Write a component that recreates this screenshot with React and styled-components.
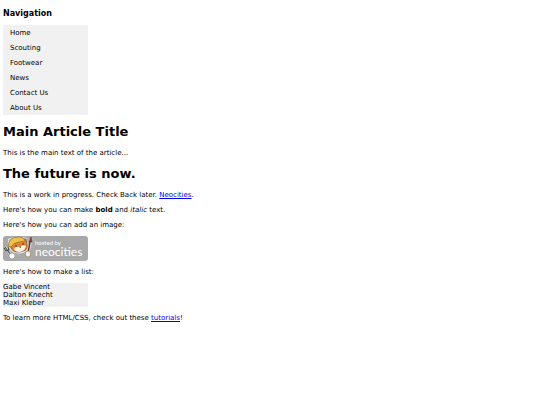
import React from "react";
import styled, { createGlobalStyle } from "styled-components";

const GlobalStyle = createGlobalStyle`
  body {
    margin: 0;
    background: #fff;
    color: #000;
    font-family: "DejaVu Sans", Verdana, sans-serif;
    font-size: 7px;
    line-height: 8px;
  }
`;

const Page = styled.div`
  padding: 9px 3px;
`;

const NavHeading = styled.h3`
  margin: 0 0 6px;
  font-size: 8px;
  line-height: 10px;
`;

const List = styled.ul`
  list-style: none;
  margin: 0;
  padding: 0;
  width: 85px;
  background: #f1f1f1;
`;

const NavLink = styled.a`
  display: block;
  padding: 2px 7px 0;
  line-height: 13px;
  color: #000;
  text-decoration: none;
`;

const Title = styled.h1`
  margin: 9px 0;
  font-size: 13px;
  line-height: 16px;
`;

const Paragraph = styled.p`
  margin: 7px 0;
`;

const TextLink = styled.a`
  color: #0000ee;
  text-decoration: underline;
`;

const Badge = styled.svg`
  display: block;
  width: 85px;
  height: 25px;
`;

const BadgeText = styled.text`
  font-family: Lato, sans-serif;
  fill: #fff;
`;

const navItems = ["Home", "Scouting", "Footwear", "News", "Contact Us", "About Us"];
const people = ["Gabe Vincent", "Dalton Knecht", "Maxi Kleber"];

function NeocitiesBadge() {
  return (
    <Badge viewBox="0 0 85 25" role="img" aria-label="Hosted by Neocities">
      <rect width="85" height="25" rx="3" fill="#a9a9a9" />
      <path d="M5 9 L5 3 L11 1 L20 1 L24 2 L25 10 Q26 15 20 17 Q11 19 7 14Z" fill="#ddd" />
      <path d="M8 9 L9 3 L18 3 L23 3 L24 9 Q25 14 20 15 Q11 18 8 12Z" fill="#df8435" stroke="#714221" strokeWidth=".7" />
      <path d="M11 13 Q13 10 16 11 Q20 8 23 10 Q22 15 17 16 Q12 16 11 13Z" fill="#fff2df" />
      <path d="M5 10 L7 4 Q10 1 15 1 Q21 1 22 5 L16 6 Q10 7 8 11Z" fill="#edc14b" stroke="#92682b" strokeWidth=".7" />
      <circle cx="13" cy="10" r=".8" fill="#322820" />
      <circle cx="20" cy="8" r=".8" fill="#322820" />
      <path d="M16 11 L18 10 L18 12Z" fill="#9e4030" />
      <path d="M1 12 L3 15 L6 14 L5 11 M2 11 L8 19" fill="none" stroke="#ddd" strokeWidth="2.2" />
      <path d="M1 12 L3 15 L6 14 L5 11 M2 11 L8 19" fill="none" stroke="#4c4c4c" strokeWidth="1.1" />
      <path d="M28 3 L25 17" stroke="#ddd" strokeWidth="3" />
      <path d="M27 6 L25 17" stroke="#682e29" strokeWidth="1.4" />
      <path d="M26 6 L28 1 L29 6Z" fill="#a9323d" stroke="#552321" strokeWidth=".5" />
      <circle cx="9" cy="20" r="3" fill="#fff" stroke="#8b8178" strokeWidth=".6" />
      <ellipse cx="25" cy="18" rx="2.6" ry="3" fill="#fff8e8" stroke="#8b715b" strokeWidth=".6" />
      <BadgeText x="32" y="9" fontSize="6">hosted by</BadgeText>
      <BadgeText x="32" y="20" fontSize="12">neocities</BadgeText>
    </Badge>
  );
}

export default function App() {
  return (
    <>
      <GlobalStyle />
      <Page>
        <nav aria-labelledby="nav-heading">
          <NavHeading id="nav-heading">Navigation</NavHeading>
          <List>
            {navItems.map((item) => (
              <li key={item}>
                <NavLink href="#">{item}</NavLink>
              </li>
            ))}
          </List>
        </nav>
        <main>
          <Title>Main Article Title</Title>
          <Paragraph>This is the main text of the article...</Paragraph>
          <Title>The future is now.</Title>
          <Paragraph>
            This is a work in progress. Check Back later. <TextLink href="#">Neocities</TextLink>.
          </Paragraph>
          <Paragraph>
            Here's how you can make <strong>bold</strong> and <em>italic</em> text.
          </Paragraph>
          <Paragraph>Here's how you can add an image:</Paragraph>
          <NeocitiesBadge />
          <Paragraph>Here's how to make a list:</Paragraph>
          <List>
            {people.map((person) => (
              <li key={person}>{person}</li>
            ))}
          </List>
          <Paragraph>
            To learn more HTML/CSS, check out these <TextLink href="#">tutorials</TextLink>!
          </Paragraph>
        </main>
      </Page>
    </>
  );
}
